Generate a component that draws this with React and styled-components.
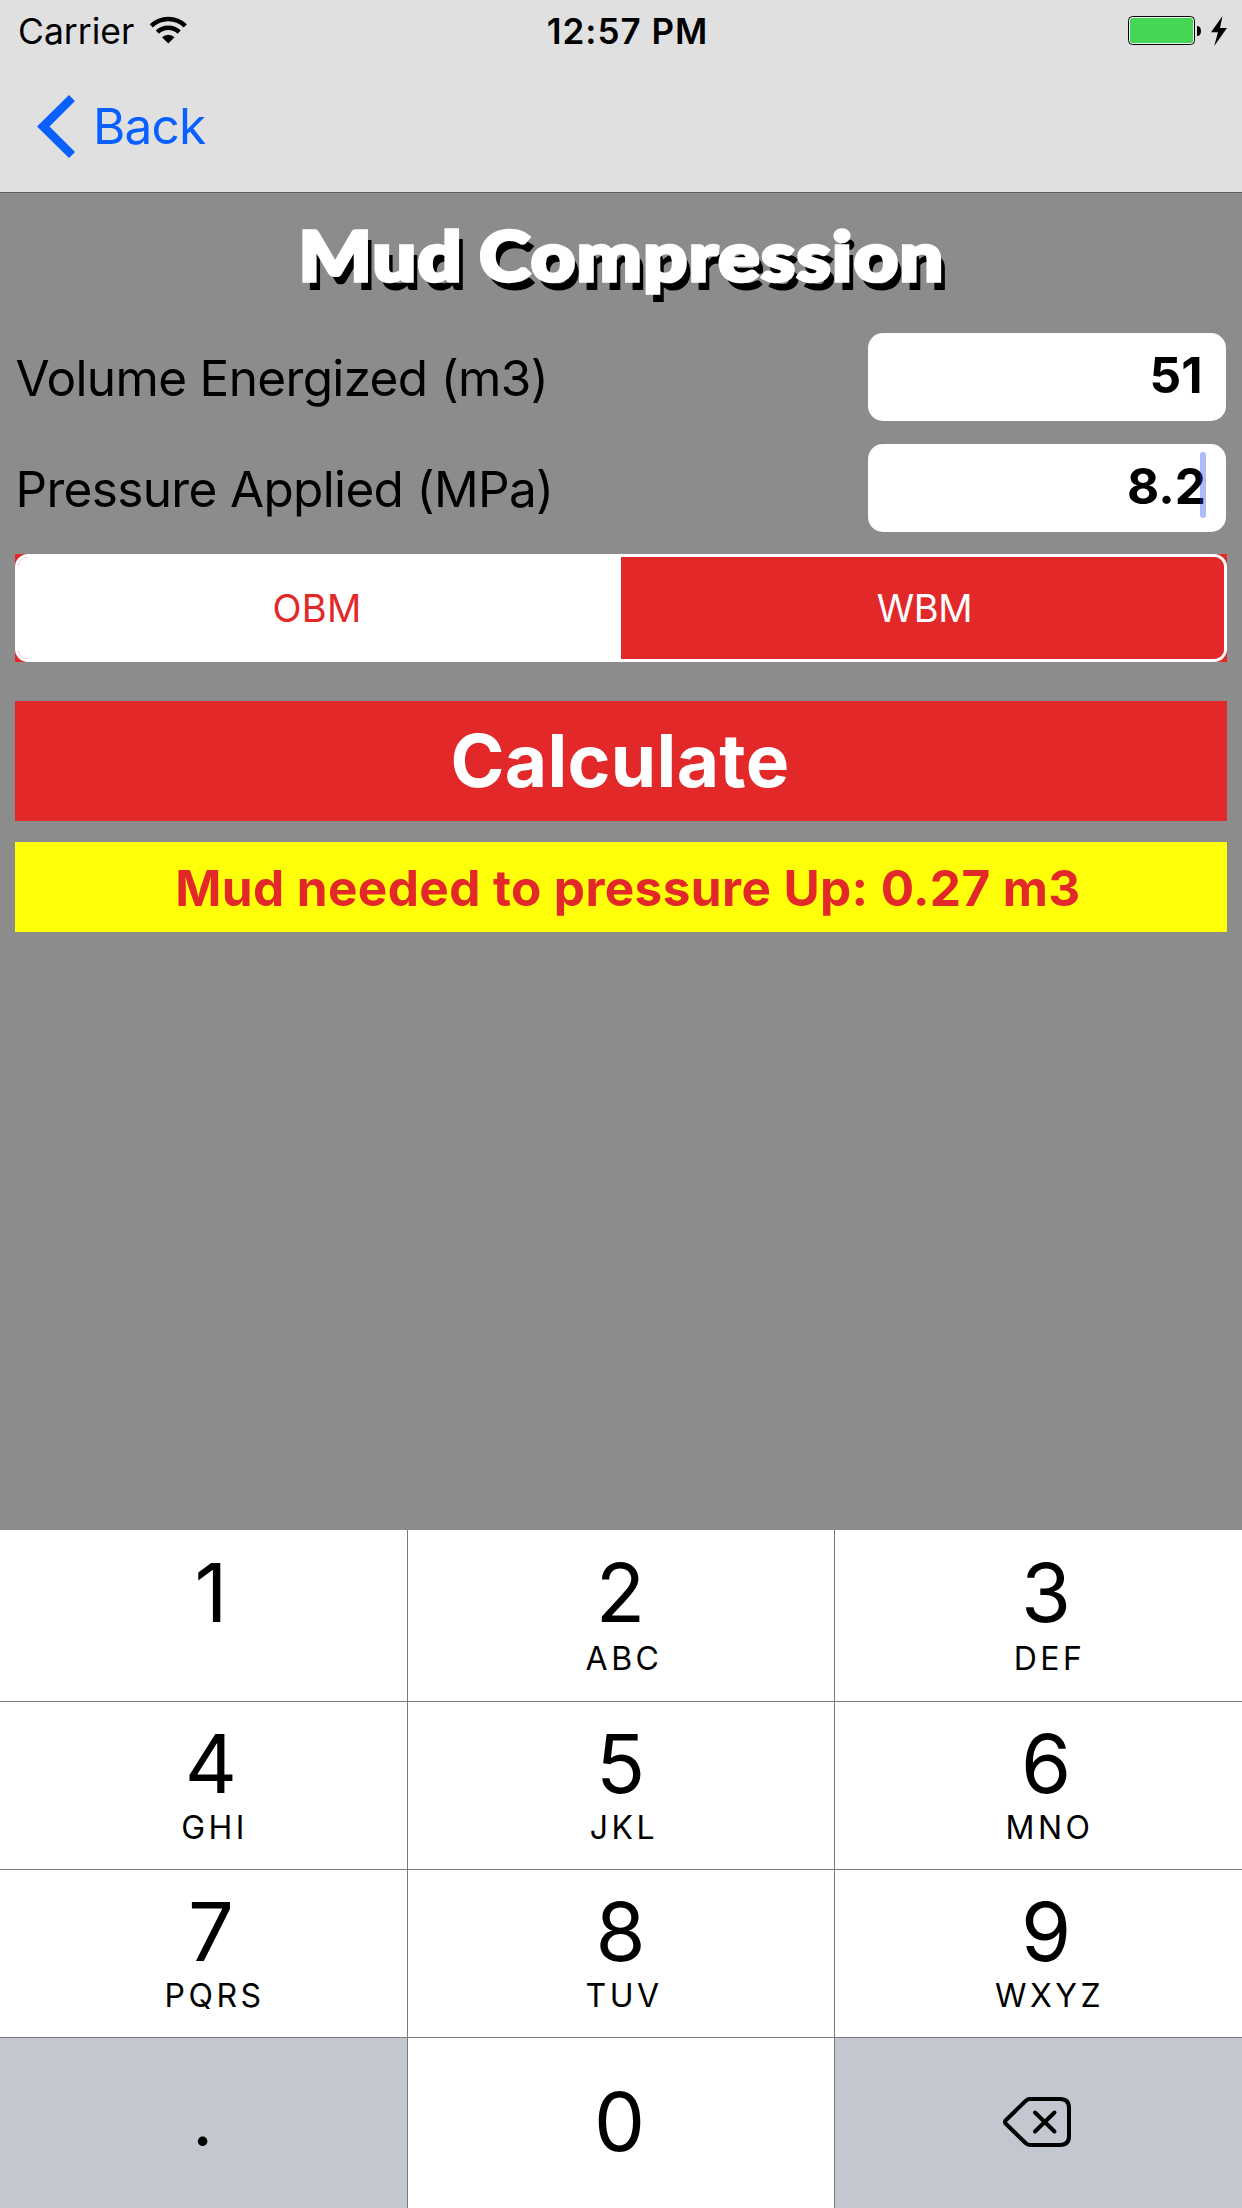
import React from "react";
import styled, { createGlobalStyle } from "styled-components";

const RED = "#e22828";
const LINE = "#7a7a7c";

const GlobalStyle = createGlobalStyle`
  * { box-sizing: border-box; }
  body { margin: 0; }
  button, input { font: inherit; }
`;

const Screen = styled.div`
  display: flex;
  flex-direction: column;
  width: 1242px;
  height: 2208px;
  overflow: hidden;
  background: #8c8c8c;
  color: #000;
  font-family: Inter, "Liberation Sans", sans-serif;
  white-space: nowrap;
`;

/* ---------- header ---------- */

const Header = styled.header`
  flex: none;
  height: 193px;
  background: #e0e0e0;
  border-bottom: 1px solid #5e5e5e;
`;

const StatusBar = styled.div`
  display: grid;
  grid-template-columns: 1fr auto 1fr;
  align-items: center;
  height: 62px;
  padding: 0 15px 0 18px;
`;

const Carrier = styled.div`
  display: flex;
  align-items: center;
  gap: 15px;
  padding-top: 1px;
  font-size: 35.5px;
  line-height: 61px;

  svg {
    margin-bottom: 3px;
  }
`;

const Clock = styled.time`
  padding-left: 10px;
  font-size: 35px;
  font-weight: 600;
  letter-spacing: 1px;
  line-height: 62px;
`;

const Power = styled.div`
  display: flex;
  justify-content: flex-end;
  align-items: center;
  gap: 10px;
  padding-bottom: 1px;
`;

const NavBar = styled.nav`
  display: flex;
  align-items: center;
  height: 129px;
  padding-left: 37px;
`;

const BackLink = styled.button`
  display: flex;
  align-items: center;
  gap: 18px;
  padding: 0;
  border: 0;
  background: none;
  color: #0a60ff;
  font-size: 49.5px;
  letter-spacing: -0.8px;
  line-height: 63px;
`;

/* ---------- form ---------- */

const Form = styled.main`
  flex: 1;
  display: flex;
  flex-direction: column;
  padding: 0 15px;
`;

const Title = styled.h1`
  height: 140px;
  margin: 0;
  padding-left: 1px;
  font-family: Lato, sans-serif;
  font-size: 68px;
  font-weight: 900;
  line-height: 123px;
  letter-spacing: 1.3px;
  word-spacing: -3px;
  text-align: center;
  color: #fff;
  -webkit-text-stroke: 3.5px #fff;
  text-shadow: 5px 9px 0 #000;
  transform: scaleX(1.133);
`;

const Fields = styled.div`
  display: flex;
  flex-direction: column;
  gap: 23px;
`;

const Field = styled.label`
  display: flex;
  justify-content: space-between;
  align-items: center;
  height: 88px;
  padding-right: 1px;
`;

const FieldLabel = styled.span`
  padding: 2px 0 0 0.5px;
  font-size: 49.5px;
  letter-spacing: -0.66px;
  line-height: 86px;
`;

const FieldBox = styled.span`
  position: relative;
  width: 358px;
  height: 88px;
  padding-right: ${(p) => p.$inset}px;
  border-radius: 15px;
  background: #fff;
  font-size: 49.5px;
  font-weight: 700;
  line-height: 84px;
  text-align: right;
`;

const Caret = styled.i`
  position: absolute;
  top: 8px;
  right: 20px;
  width: 6px;
  height: 66px;
  border-radius: 3px;
  background: rgba(23, 60, 240, 0.35);
`;

const SegmentFrame = styled.div`
  height: 108px;
  margin-top: 22px;
  background: ${RED};
`;

const Segments = styled.div`
  display: grid;
  grid-template-columns: 1fr 1fr;
  height: 100%;
  border: 3px solid #fff;
  border-radius: 13px;
  overflow: hidden;
`;

const Segment = styled.button`
  padding: ${(p) => (p.$selected ? "0 0 0 4px" : "0 5px 0 0")};
  border: 0;
  background: ${(p) => (p.$selected ? RED : "#fff")};
  color: ${(p) => (p.$selected ? "#fff" : RED)};
  font-size: 38px;
  letter-spacing: ${(p) => (p.$selected ? -0.3 : 0.2)}px;
`;

const CalculateButton = styled.button`
  height: 120px;
  margin-top: 39px;
  padding: 0 2px 1px 0;
  border: 0;
  background: ${RED};
  color: #fff;
  font-size: 73px;
  font-weight: 700;
  letter-spacing: 0.3px;
`;

const Result = styled.output`
  display: block;
  height: 90px;
  margin-top: 21px;
  padding-left: 14px;
  background: #ffff0a;
  color: ${RED};
  font-size: 49.5px;
  font-weight: 700;
  letter-spacing: 0.39px;
  line-height: 92px;
  text-align: center;
`;

/* ---------- keypad ---------- */

const Keypad = styled.div`
  flex: none;
  display: grid;
  grid-template-columns: 407px 426px 407px;
  grid-template-rows: 171px 167px 167px 170px;
  gap: 1px;
  background: ${LINE};
`;

const Key = styled.button`
  display: flex;
  flex-direction: column;
  align-items: center;
  padding: ${(p) => (p.$first ? 23 : 22)}px ${(p) => (p.$outer ? 0 : 1)}px 0 ${(p) => (p.$outer ? 15 : 0)}px;
  border: 0;
  background: #fff;
  color: #000;
`;

const FootKey = styled(Key)`
  justify-content: center;
  padding: 0 ${(p) => p.$shift || 0}px ${(p) => p.$lift || 0}px 0;
  background: ${(p) => (p.$grey ? "#c3c7cf" : "#fff")};
`;

const Digit = styled.span`
  font-size: 81px;
  line-height: 80px;
`;

const Point = styled.span`
  font-size: 72px;
  line-height: 80px;
`;

const Letters = styled.span`
  margin-top: ${(p) => (p.$first ? 10 : 8)}px;
  padding-left: 7px;
  font-size: 32px;
  line-height: 32px;
  letter-spacing: 3.5px;
`;

/* ---------- icons ---------- */

const WifiIcon = () => (
  <svg width="38" height="30" viewBox="149 15 38 30" fill="none" stroke="#000" strokeWidth="4.6">
    <path d="M151.3 25.9a24.5 24.5 0 0 1 34 0" />
    <path d="M157.4 32.2a15.7 15.7 0 0 1 21.8 0" />
    <path d="M162 37.2a9 9 0 0 1 12.6 0L168.3 43.6Z" fill="#000" stroke="none" />
  </svg>
);

const BatteryIcon = () => (
  <svg width="73" height="29" viewBox="0 0 73 29">
    <rect x="0.5" y="0.5" width="66" height="28" rx="4" fill="#f2f2f2" stroke="#000" />
    <rect x="2" y="2" width="63" height="25" rx="2.5" fill="#46d655" />
    <path d="M69 10c2.600 0 4 2 4 5s-1.400 5-4 5z" fill="#000" />
  </svg>
);

const BoltIcon = () => (
  <svg width="16" height="30" viewBox="0 0 16 30">
    <path d="M11.500 0 0 16.200H7L3.200 30 16 12H9Z" fill="#000" />
  </svg>
);

const ChevronIcon = () => (
  <svg width="38" height="63" viewBox="0 0 38 63">
    <path d="M0 31.500 32 0 38 6 12.500 31.500 38 57 32 63Z" fill="#0a60ff" />
  </svg>
);

const BackspaceIcon = () => (
  <svg width="68" height="50" viewBox="0 0 68 50" fill="none" stroke="#000" strokeWidth="4" strokeLinecap="round" strokeLinejoin="round">
    <path d="M27 2H57Q66 2 66 11V39Q66 48 57 48H27Q24.500 48 22.800 46.200L2.800 26.800Q1.200 25 2.800 23.200L22.800 3.800Q24.500 2 27 2Z" />
    <path d="M32 15.500 51.500 34.500M51.500 15.500 32 34.500" />
  </svg>
);

const FIELDS = [
  { label: "Volume Energized (m3)", value: "51", inset: 23.5 },
  { label: "Pressure Applied (MPa)", value: "8.2", inset: 20, focused: true },
];

const KEYS = [
  ["1", ""], ["2", "ABC"], ["3", "DEF"],
  ["4", "GHI"], ["5", "JKL"], ["6", "MNO"],
  ["7", "PQRS"], ["8", "TUV"], ["9", "WXYZ"],
];

export default function App() {
  return (
    <Screen>
      <GlobalStyle />
      <Header>
        <StatusBar>
          <Carrier>Carrier<WifiIcon /></Carrier>
          <Clock>12:57 PM</Clock>
          <Power><BatteryIcon /><BoltIcon /></Power>
        </StatusBar>
        <NavBar>
          <BackLink><ChevronIcon />Back</BackLink>
        </NavBar>
      </Header>

      <Form>
        <Title>Mud Compression</Title>
        <Fields>
          {FIELDS.map((f) => (
            <Field key={f.label}>
              <FieldLabel>{f.label}</FieldLabel>
              <FieldBox $inset={f.inset}>
                {f.value}
                {f.focused && <Caret />}
              </FieldBox>
            </Field>
          ))}
        </Fields>
        <SegmentFrame>
          <Segments>
            <Segment>OBM</Segment>
            <Segment $selected>WBM</Segment>
          </Segments>
        </SegmentFrame>
        <CalculateButton>Calculate</CalculateButton>
        <Result>Mud needed to pressure Up: 0.27 m3</Result>
      </Form>

      <Keypad>
        {KEYS.map(([digit, letters], i) => (
          <Key key={digit} $first={i < 3} $outer={i % 3 !== 1}>
            <Digit>{digit}</Digit>
            {letters && <Letters $first={i < 3}>{letters}</Letters>}
          </Key>
        ))}
        <FootKey $grey $lift={7} $shift={2}><Point>.</Point></FootKey>
        <FootKey $lift={2} $shift={3}><Digit>0</Digit></FootKey>
        <FootKey $grey $shift={3} $lift={2}><BackspaceIcon /></FootKey>
      </Keypad>
    </Screen>
  );
}
